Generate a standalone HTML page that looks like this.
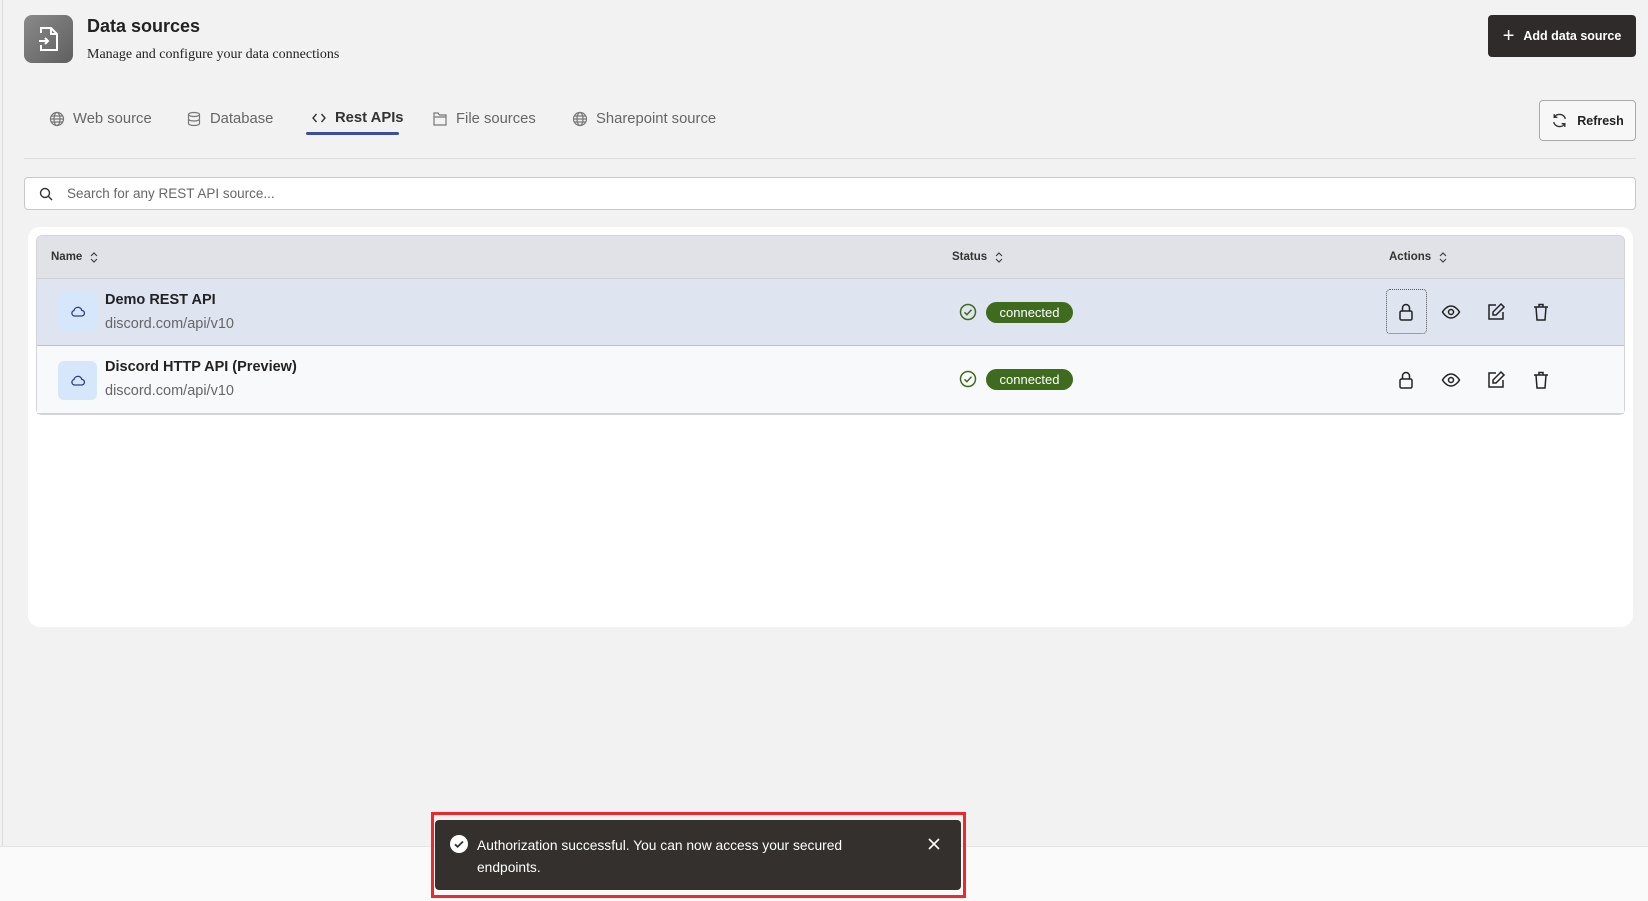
<!DOCTYPE html>
<html><head><meta charset="utf-8"><style>
*{box-sizing:border-box;margin:0;padding:0}
body{width:1648px;height:901px;background:#f2f2f2;font-family:"Liberation Sans",sans-serif;position:relative;overflow:hidden;color:#222}
.abs{position:absolute}
svg{display:block}
.tab{position:absolute;top:111px;display:flex;align-items:center;gap:8px;font-size:14.8px;color:#666}
.tab svg{width:16px;height:16px}
.hdr{font-size:11.5px;font-weight:bold;color:#333;display:flex;align-items:center;gap:8px}
.row{position:absolute;left:37px;width:1587px;height:67px}
.ricon{position:absolute;left:21px;top:13px;width:39px;height:39px;border-radius:6px;background:#d6e6fb;display:flex;align-items:center;justify-content:center}
.rt{position:absolute;left:68px;font-size:14.5px}
.badge{position:absolute;left:949px;width:87px;height:21px;border-radius:11px;background:#3f6b1f;color:#fff;font-size:13px;text-align:center;line-height:21px}
</style></head><body>
<div class="abs" style="left:2px;top:0;width:1px;height:846px;background:#ddd"></div>
<div class="abs" style="left:0;top:846px;width:1648px;height:55px;background:#fafafa;border-top:1px solid #e4e4e4"></div>
<div class="abs" style="left:24px;top:15px;width:49px;height:48px;border-radius:8px;background:linear-gradient(135deg,#8a8a8a,#5f5f5f);display:flex;align-items:center;justify-content:center">
<svg width="24" height="28" viewBox="0 0 24 28" fill="none" stroke="#fff" stroke-width="2"><path d="M4 8V3h10l6 6v16H4v-5"/><path d="M14 3v6h6"/><path d="M2 16h9M8 13l3 3-3 3"/></svg></div>
<div class="abs" style="left:87px;top:16px;font-size:18px;font-weight:bold;color:#222">Data sources</div>
<div class="abs" style="left:87px;top:47px;font-size:14px;font-family:'Liberation Serif',serif;color:#222">Manage and configure your data connections</div>
<div class="abs" style="left:1488px;top:15px;width:148px;height:42px;background:#2e2b2a;border-radius:4px;color:#fff;font-size:12.5px;font-weight:bold;display:flex;align-items:center;justify-content:center;gap:9px"><span style="font-size:20px;font-weight:normal;line-height:1">+</span>Add data source</div>
<div class="tab" style="left:49px"><svg viewBox="0 0 16 16" fill="none" stroke="#777" stroke-width="1.2"><circle cx="8" cy="8" r="6.5"/><ellipse cx="8" cy="8" rx="3" ry="6.5"/><path d="M1.5 8h13M2.5 5h11M2.5 11h11"/></svg>Web source</div>
<div class="tab" style="left:186px"><svg viewBox="0 0 16 16" fill="none" stroke="#777" stroke-width="1.2"><ellipse cx="8" cy="3.5" rx="5.5" ry="2"/><path d="M2.5 3.5v9c0 1.1 2.5 2 5.5 2s5.5-.9 5.5-2v-9M2.5 8c0 1.1 2.5 2 5.5 2s5.5-.9 5.5-2"/></svg>Database</div>
<div class="tab" style="left:311px;color:#333;font-weight:600;top:110px"><svg viewBox="0 0 16 16" fill="none" stroke="#333" stroke-width="1.4"><path d="M5.5 4L2 8l3.5 4M10.5 4L14 8l-3.5 4"/></svg>Rest APIs</div>
<div class="abs" style="left:306px;top:132px;width:93px;height:3px;background:#3d4f9a;border-radius:2px"></div>
<div class="tab" style="left:432px"><svg viewBox="0 0 16 16" fill="none" stroke="#777" stroke-width="1.2"><path d="M2 2h4l1.5 2H14v10H2z M2 6h12"/></svg>File sources</div>
<div class="tab" style="left:572px"><svg viewBox="0 0 16 16" fill="none" stroke="#777" stroke-width="1.2"><circle cx="8" cy="8" r="6.5"/><ellipse cx="8" cy="8" rx="3" ry="6.5"/><path d="M1.5 8h13M2.5 5h11M2.5 11h11"/></svg>Sharepoint source</div>
<div class="abs" style="left:1539px;top:100px;width:97px;height:41px;border:1px solid #aaa;border-radius:4px;background:#f7f7f7;display:flex;align-items:center;justify-content:center;gap:9px;font-size:12.5px;font-weight:bold;color:#222"><svg width="17" height="17" viewBox="0 0 16 16" fill="none" stroke="#333" stroke-width="1.3"><path d="M13.5 6.5A5.8 5.8 0 0 0 3 5M2.5 9.5A5.8 5.8 0 0 0 13 11M3 2v3h3M13 14v-3h-3"/></svg>Refresh</div>
<div class="abs" style="left:24px;top:158px;width:1612px;height:1px;background:#ddd"></div>
<div class="abs" style="left:24px;top:177px;width:1612px;height:33px;border:1px solid #c8c8c8;border-radius:4px;background:#fff;display:flex;align-items:center">
<svg style="margin-left:14px" width="14" height="14" viewBox="0 0 14 14" fill="none" stroke="#333" stroke-width="1.4"><circle cx="6" cy="6" r="4.5"/><path d="M9.3 9.3L13 13"/></svg>
<span style="margin-left:14px;font-size:13.5px;color:#666">Search for any REST API source...</span></div>
<div class="abs" style="left:28px;top:227px;width:1605px;height:400px;background:#fff;border-radius:12px"></div>
<div class="abs" style="left:36px;top:235px;width:1589px;height:180px;border:1px solid #d4d4d8;border-radius:6px;overflow:hidden;background:#f8f9fb">
<div class="abs" style="left:0;top:0;width:100%;height:43px;background:#e1e2e7;border-bottom:1px solid #cfd0d4"></div>
<div class="abs hdr" style="left:14px;top:15px">Name <svg width="8" height="11" viewBox="0 0 8 11" fill="none" stroke="#444" stroke-width="1.2"><path d="M1 4l3-3 3 3M1 7l3 3 3-3"/></svg></div>
<div class="abs hdr" style="left:915px;top:15px">Status <svg width="8" height="11" viewBox="0 0 8 11" fill="none" stroke="#444" stroke-width="1.2"><path d="M1 4l3-3 3 3M1 7l3 3 3-3"/></svg></div>
<div class="abs hdr" style="left:1352px;top:15px">Actions <svg width="8" height="11" viewBox="0 0 8 11" fill="none" stroke="#444" stroke-width="1.2"><path d="M1 4l3-3 3 3M1 7l3 3 3-3"/></svg></div>
</div>
<div class="row" style="top:279px;background:#dfe5f0;border-bottom:1px solid #9cc6f5">
<div class="ricon"><svg width="16" height="14" viewBox="0 0 16 14" fill="none" stroke="#2f3e80" stroke-width="1.3"><path d="M4.5 11h7a2.8 2.8 0 0 0 .3-5.6A4 4 0 0 0 4 5.5 2.8 2.8 0 0 0 4.5 11z"/></svg></div>
<div class="rt" style="top:13px;font-weight:bold;color:#222">Demo REST API</div>
<div class="rt" style="top:37px;color:#666">discord.com/api/v10</div>
<svg class="abs" style="left:922px;top:24px" width="18" height="18" viewBox="0 0 18 18" fill="none" stroke="#3f6b1f" stroke-width="1.5"><circle cx="9" cy="9" r="7.5"/><path d="M5.5 9.3l2.4 2.4 4.6-5"/></svg>
<div class="badge" style="top:23px">connected</div>
<div class="abs" style="left:1349px;top:10px;width:41px;height:45px;border:1px dotted #555;border-radius:4px"></div>
</div>
<div class="row" style="top:347px;background:#f8f9fb;border-bottom:1px solid #d4d4d8">
<div class="ricon" style="top:14px"><svg width="16" height="14" viewBox="0 0 16 14" fill="none" stroke="#2f3e80" stroke-width="1.3"><path d="M4.5 11h7a2.8 2.8 0 0 0 .3-5.6A4 4 0 0 0 4 5.5 2.8 2.8 0 0 0 4.5 11z"/></svg></div>
<div class="rt" style="top:12px;font-weight:bold;color:#222">Discord HTTP API (Preview)</div>
<div class="rt" style="top:36px;color:#666">discord.com/api/v10</div>
<svg class="abs" style="left:922px;top:23px" width="18" height="18" viewBox="0 0 18 18" fill="none" stroke="#3f6b1f" stroke-width="1.5"><circle cx="9" cy="9" r="7.5"/><path d="M5.5 9.3l2.4 2.4 4.6-5"/></svg>
<div class="badge" style="top:22px">connected</div>
</div>
<svg class="abs" style="left:1396px;top:302px" width="20" height="20" viewBox="0 0 20 20" fill="none" stroke="#222" stroke-width="1.5"><rect x="4" y="9" width="12" height="9" rx="1.5"/><path d="M6.5 9V6a3.5 3.5 0 0 1 7 0v3"/></svg>
<svg class="abs" style="left:1441px;top:302px" width="20" height="20" viewBox="0 0 20 20" fill="none" stroke="#222" stroke-width="1.5"><path d="M1.5 10s3.5-6 8.5-6 8.5 6 8.5 6-3.5 6-8.5 6-8.5-6-8.5-6z"/><circle cx="10" cy="10" r="2.5"/></svg>
<svg class="abs" style="left:1486px;top:302px" width="20" height="20" viewBox="0 0 20 20" fill="none" stroke="#222" stroke-width="1.5"><path d="M10 3H3v14h14v-7"/><path d="M15 2l3 3-8 8H7v-3z"/></svg>
<svg class="abs" style="left:1531px;top:302px" width="20" height="20" viewBox="0 0 20 20" fill="none" stroke="#222" stroke-width="1.5"><path d="M3 5h14M8 5V2.5h4V5M5 5l1 13h8l1-13"/></svg>
<svg class="abs" style="left:1396px;top:370px" width="20" height="20" viewBox="0 0 20 20" fill="none" stroke="#222" stroke-width="1.5"><rect x="4" y="9" width="12" height="9" rx="1.5"/><path d="M6.5 9V6a3.5 3.5 0 0 1 7 0v3"/></svg>
<svg class="abs" style="left:1441px;top:370px" width="20" height="20" viewBox="0 0 20 20" fill="none" stroke="#222" stroke-width="1.5"><path d="M1.5 10s3.5-6 8.5-6 8.5 6 8.5 6-3.5 6-8.5 6-8.5-6-8.5-6z"/><circle cx="10" cy="10" r="2.5"/></svg>
<svg class="abs" style="left:1486px;top:370px" width="20" height="20" viewBox="0 0 20 20" fill="none" stroke="#222" stroke-width="1.5"><path d="M10 3H3v14h14v-7"/><path d="M15 2l3 3-8 8H7v-3z"/></svg>
<svg class="abs" style="left:1531px;top:370px" width="20" height="20" viewBox="0 0 20 20" fill="none" stroke="#222" stroke-width="1.5"><path d="M3 5h14M8 5V2.5h4V5M5 5l1 13h8l1-13"/></svg>
<div class="abs" style="left:431px;top:812px;width:535px;height:86px;border:3px solid #f0282d"></div>
<div class="abs" style="left:435px;top:820px;width:526px;height:70px;background:#33302d;border-radius:4px">
<svg class="abs" style="left:15px;top:15px" width="18" height="18" viewBox="0 0 18 18"><circle cx="9" cy="9" r="9" fill="#fff"/><path d="M5 9.3l2.6 2.5L13 6.5" fill="none" stroke="#33302d" stroke-width="1.8"/></svg>
<div class="abs" style="left:42px;top:15px;width:420px;font-size:13.8px;line-height:22px;color:#fff">Authorization successful. You can now access your secured endpoints.</div>
<svg class="abs" style="left:493px;top:18px" width="12" height="12" viewBox="0 0 12 12" stroke="#fff" stroke-width="1.6"><path d="M1 1l10 10M11 1L1 11"/></svg>
</div>
</body></html>
